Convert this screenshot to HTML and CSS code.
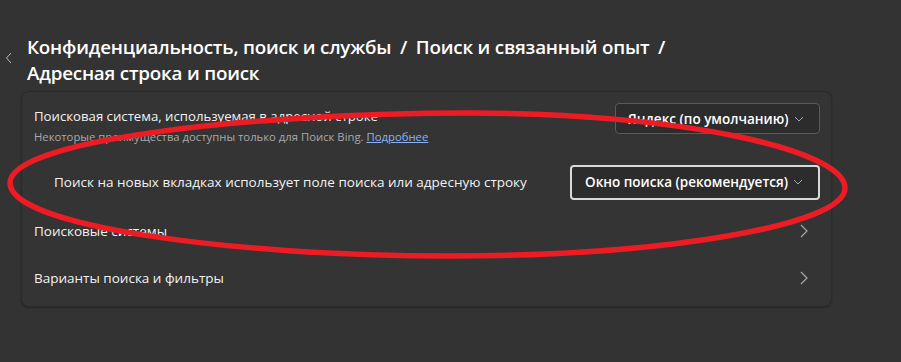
FILE: index.html
```html
<!DOCTYPE html>
<html lang="ru">
<head>
<meta charset="utf-8">
<link rel="stylesheet" href="styles.css">
</head>
<body>
<div class="page">
  <header class="header">
    <button class="back" aria-label="Назад">
      <svg width="8" height="12" viewBox="0 0 8 12"><path d="M6 1 L1.5 6 L6 11" fill="none" stroke="#bdbdbd" stroke-width="1"/></svg>
    </button>
    <h1 class="title">Конфиденциальность, поиск и службы <span class="sep">/</span> Поиск и связанный опыт <span class="sep">/</span><br>Адресная строка и поиск</h1>
  </header>

  <section class="card">
    <div class="row row-engine">
      <div class="label">
        <div class="main">Поисковая система, используемая в адресной строке</div>
        <div class="sub">Некоторые преимущества доступны только для Поиск Bing. <a href="#" class="link">Подробнее</a></div>
      </div>
      <div class="select select-engine">
        <span>Яндекс (по умолчанию)</span>
        <svg class="caret" width="10" height="6" viewBox="0 0 10 6"><path d="M1 1 L5 5 L9 1" fill="none" stroke="#a8a8a8" stroke-width="1"/></svg>
      </div>
    </div>

    <div class="row row-newtab">
      <div class="main indent">Поиск на новых вкладках использует поле поиска или адресную строку</div>
      <div class="select select-focus">
        <span>Окно поиска (рекомендуется)</span>
        <svg class="caret" width="10" height="6" viewBox="0 0 10 6"><path d="M1 1 L5 5 L9 1" fill="none" stroke="#a8a8a8" stroke-width="1"/></svg>
      </div>
    </div>

    <div class="row row-link row-engines">
      <div class="main">Поисковые системы</div>
      <svg class="chev" width="8" height="14" viewBox="0 0 8 14"><path d="M1 1 L7 7 L1 13" fill="none" stroke="#a8a8a8" stroke-width="1.2"/></svg>
    </div>

    <div class="row row-link">
      <div class="main">Варианты поиска и фильтры</div>
      <svg class="chev" width="8" height="14" viewBox="0 0 8 14"><path d="M1 1 L7 7 L1 13" fill="none" stroke="#a8a8a8" stroke-width="1.2"/></svg>
    </div>
  </section>

  <svg class="annotation" width="901" height="362" viewBox="0 0 901 362">
    <path d="M 10 183 C 10 140 250 113 470 113 C 680 113 845 150 845 188 C 845 226 660 256 450 256 C 230 256 10 226 10 183 Z" fill="none" stroke="#ed1c24" stroke-width="5.5"/>
  </svg>
</div>
</body>
</html>
```

FILE: styles.css
```css
* { box-sizing: border-box; }
html, body { margin: 0; padding: 0; }
body {
  background: #333333;
  color: #ffffff;
  font-family: "Open Sans", "Noto Sans", "Liberation Sans", sans-serif;
  width: 901px;
  height: 362px;
  overflow: hidden;
}
.page {
  position: relative;
  width: 901px;
  height: 362px;
  padding-top: 34px;
}
.header {
  display: flex;
  align-items: flex-start;
  padding-left: 5px;
}
.back {
  background: none;
  border: 0;
  padding: 0;
  margin: 18px 14px 0 0;
  width: 8px;
  height: 12px;
  display: flex;
}
.title {
  margin: 0;
  font-size: 18.8px;
  font-weight: 600;
  line-height: 26px;
  color: #ffffff;
  letter-spacing: -0.2px;
}
.sep { padding: 0 4px; }

.card {
  margin: 5px 69px 0 21px;
  background: #343434;
  border: 1px solid #2a2a2a;
  border-radius: 8px;
  box-shadow: 0 1px 2px rgba(0,0,0,0.25);
  padding: 0 11px 4px 12px;
}
.row {
  display: flex;
  justify-content: space-between;
  align-items: center;
}
.row-engine {
  align-items: flex-start;
  height: 64px;
  padding-top: 14px;
}
.row-engine .select { margin-top: -3px; }
.row-newtab { height: 52px; }
.row-link { height: 48px; padding-right: 12px; }
.row-engines { height: 46px; }
.main {
  font-size: 13.5px;
  line-height: 20px;
  color: #f2f2f2;
}
.label .main { font-size: 13.2px; }
.indent { padding-left: 20px; }
.sub {
  font-size: 11.3px;
  line-height: 18px;
  margin-top: 2px;
  color: #a9a9a9;
}
.link { color: #8ab4f8; text-decoration: underline; }
.select {
  display: flex;
  align-items: center;
  justify-content: space-between;
  border-radius: 4px;
  font-size: 13.5px;
  font-weight: 600;
  color: #ffffff;
  background: #2c2c2c;
}
.select-engine {
  width: 205px;
  height: 31px;
  border: 1px solid #5a5a5a;
  padding: 0 15px 0 12px;
}
.select-focus {
  width: 250px;
  height: 35px;
  border: 2px solid #d9d9d9;
  padding: 0 15px 0 13px;
}
.caret { flex: none; }
.chev { flex: none; }
.annotation {
  position: absolute;
  left: 0;
  top: 0;
  pointer-events: none;
}
```
